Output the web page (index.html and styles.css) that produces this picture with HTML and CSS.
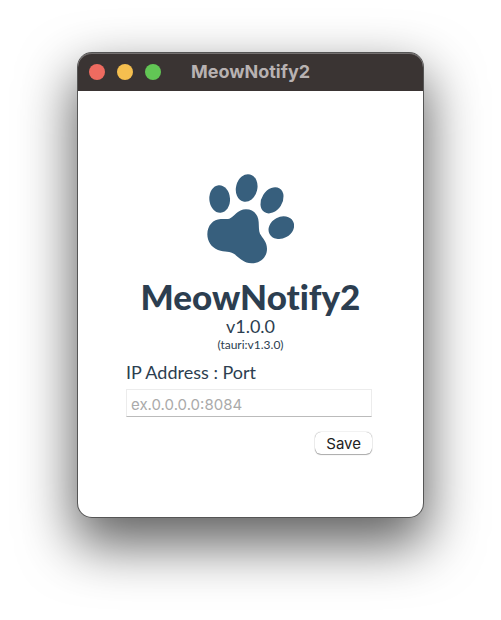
FILE: index.html
```
<!DOCTYPE html>
<html lang="en">
<head>
    <meta charset="UTF-8">
    <meta name="viewport" content="width=device-width, initial-scale=1.0">
    <title>MeowNotify2</title>
    <link rel="stylesheet" href="styles.css">
</head>
<body>
    <div class="window">
        <header class="titlebar">
            <div class="controls">
                <button type="button" class="control close" aria-label="Close"></button>
                <button type="button" class="control minimize" aria-label="Minimize"></button>
                <button type="button" class="control zoom" aria-label="Zoom"></button>
            </div>
            <div class="window-title">MeowNotify2</div>
        </header>
        <main class="container">
            <svg class="logo" viewBox="36 26 261 270" aria-hidden="true">
                <ellipse cx="74" cy="101" rx="31" ry="41" transform="rotate(-4 74 101)"/>
                <ellipse cx="155" cy="68" rx="32" ry="42" transform="rotate(14 155 68)"/>
                <ellipse cx="231" cy="105" rx="31" ry="42" transform="rotate(33 231 105)"/>
                <ellipse cx="259" cy="187" rx="40" ry="32" transform="rotate(-28 259 187)"/>
                <path d="M103 160 C117 155 128 132 153 132 C176 132 190 148 191 170 C192 185 191 195 195 205 C202 218 216 228 216 250 C216 277 195 294 170 294 C147 294 135 280 119 267 C105 256 90 262 69 254 C49 246 37 228 37 207 C37 180 55 162 77 161 C87 160 95 163 103 160 Z"/>
            </svg>
            <h1>MeowNotify2</h1>
            <div class="version">v1.0.0</div>
            <div class="tauri-version">(tauri:v1.3.0)</div>
            <form class="settings" id="settingsForm">
                <label for="address">IP Address : Port</label>
                <input type="text" id="address" name="address" placeholder="ex.0.0.0.0:8084">
                <button type="submit" class="save-button">Save</button>
            </form>
        </main>
    </div>
</body>
</html>
```

FILE: styles.css
```
body {
    margin: 0;
    padding: 53px 78px 103px;
    background-color: #fff;
    color: #2c3e50;
    font-family: Lato, "Liberation Sans", sans-serif;
    font-variant-ligatures: none;
}
.window {
    border-radius: 14px;
    background-color: #fff;
    box-shadow: 0 0 0 1px #555, 0 24px 54px 4px rgba(0, 0, 0, 0.62);
}
.titlebar {
    display: grid;
    grid-template-columns: 74px 1fr 74px;
    align-items: center;
    height: 38px;
    border-radius: 14px 14px 0 0;
    background-color: #3a3433;
    box-shadow: inset 0 1px 0 #747070;
}
.controls {
    display: flex;
    gap: 12px;
    padding-left: 11px;
}
.control {
    width: 16px;
    height: 16px;
    flex-shrink: 0;
    padding: 0;
    border: none;
    border-radius: 50%;
}
.close {
    background-color: #ee6b60;
}
.minimize {
    background-color: #f5bf4f;
}
.zoom {
    background-color: #62c655;
}
.window-title {
    color: #b8b2b2;
    font-family: Inter, sans-serif;
    font-size: 18px;
    font-weight: 700;
    line-height: 22px;
    text-align: center;
}
.container {
    display: flex;
    flex-direction: column;
    align-items: center;
    padding: 83px 0 63px;
}
.logo {
    width: 87px;
    height: 90px;
    fill: #375f7d;
}
h1 {
    margin: 12px 0 0;
    font-size: 35px;
    font-weight: 900;
    line-height: 40px;
}
.version {
    font-size: 18px;
    line-height: 20px;
}
.tauri-version {
    font-size: 12px;
    line-height: 18px;
}
.settings {
    display: flex;
    flex-direction: column;
    box-sizing: border-box;
    width: 100%;
    margin-top: 6px;
    padding: 0 51px 0 48px;
}
.settings label {
    font-size: 18px;
    line-height: 24px;
}
.settings input {
    box-sizing: border-box;
    width: 100%;
    height: 28px;
    margin-top: 5px;
    padding: 2px 4px 0;
    border: 1px solid #ececec;
    border-bottom-color: #bbb;
    background-color: #fff;
    color: #2c3e50;
    font-family: Inter, sans-serif;
    font-size: 15px;
}
.settings input::placeholder {
    color: #aaa;
}
.save-button {
    align-self: flex-end;
    height: 22px;
    margin-top: 15px;
    padding: 0 11px;
    border: none;
    border-radius: 6px;
    background-color: #fff;
    box-shadow: 0 0 1px rgba(0, 0, 0, 0.5), 0 1px 1px rgba(0, 0, 0, 0.3);
    color: #222;
    font-family: Inter, sans-serif;
    font-size: 15px;
}
```
